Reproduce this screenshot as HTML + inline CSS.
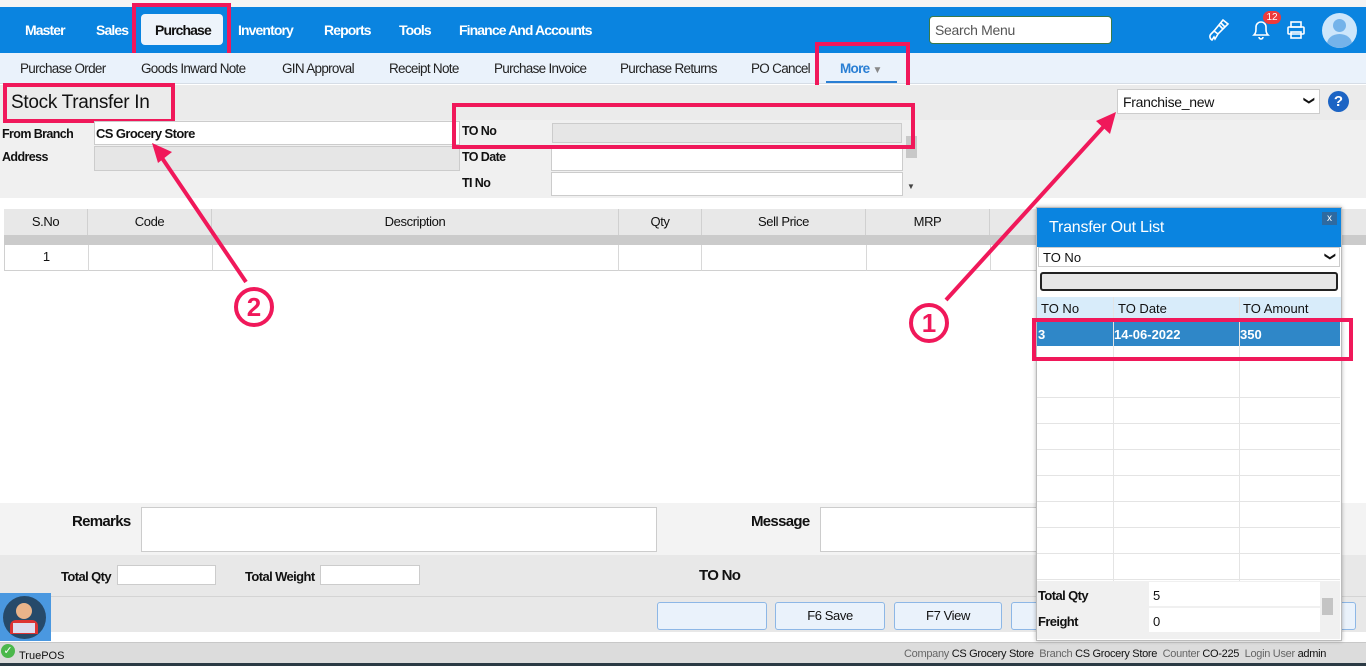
<!DOCTYPE html>
<html><head><meta charset="utf-8"><style>
*{box-sizing:border-box;margin:0;padding:0}
body{width:1366px;height:666px;position:relative;overflow:hidden;background:#fff;font-family:"Liberation Sans",sans-serif;font-size:13px;color:#111}
.a{position:absolute}
.nav{left:0;top:7px;width:1366px;height:46px;background:#0a84e0}
.nv{top:22px;color:#fff;font-weight:bold;font-size:14px;letter-spacing:-0.9px}
.sub{left:0;top:53px;width:1366px;height:31px;background:#eaf2fb;border-bottom:1px solid #d6dde6}
.sb{top:61px;font-size:13.5px;color:#222;letter-spacing:-0.7px}
.lbl{font-size:12.5px;font-weight:bold;letter-spacing:-0.6px}
.inp{background:#fff;border:1px solid #ccc}
.gin{background:#e6e6e6;border:1px solid #ccc}
.red{border:4px solid #f0185a}
.th{top:209px;height:26px;background:#e8e8e8;border-right:1px solid #d0d0d0;text-align:center;line-height:26px;font-size:13px;letter-spacing:-0.4px}
.td{top:245px;height:26px;border-right:1px solid #d8d8d8;border-bottom:1px solid #d0d0d0}
.btn{top:602px;height:28px;background:#eaf2fb;border:1px solid #8db7e6;border-radius:3px;text-align:center;line-height:26px;font-size:13px;letter-spacing:-0.4px}
.circ{width:40px;height:40px;border:4px solid #f0185a;border-radius:50%;background:#fff;color:#f0185a;font-weight:bold;font-size:26px;text-align:center;line-height:32px}
.chev{display:inline-block;transform:rotate(90deg);font-size:11px}
</style></head><body>
<div class="a" style="left:0;top:0;width:1366px;height:7px;background:#f4f4f4"></div>
<div class="a nav"></div>
<div class="a nv" style="left:25px">Master</div>
<div class="a nv" style="left:96px">Sales</div>
<div class="a" style="left:141px;top:14px;width:82px;height:31px;background:#eef4fb;border-radius:4px"></div>
<div class="a nv" style="left:155px;color:#111">Purchase</div>
<div class="a red" style="left:132px;top:3px;width:99px;height:58px"></div>
<div class="a nv" style="left:238px">Inventory</div>
<div class="a nv" style="left:324px">Reports</div>
<div class="a nv" style="left:399px">Tools</div>
<div class="a nv" style="left:459px">Finance And Accounts</div>
<div class="a" style="left:929px;top:16px;width:183px;height:28px;background:#fff;border:1px solid #3a7a4a;border-radius:4px;color:#555;font-size:14px;padding:5px 5px;letter-spacing:-0.3px">Search Menu</div>
<svg class="a" style="left:1206px;top:17px" width="30" height="26" viewBox="0 0 30 26"><g fill="none" stroke="#fff" stroke-width="1.6"><path d="M8 14l9-11 5 4-10 10z"/><path d="M8 14l-3 3c-2 2-1 5 1 6l2-3 1 2 3-5"/><path d="M13 8l4 4M15 6l4 4"/></g></svg>
<svg class="a" style="left:1250px;top:18px" width="22" height="24" viewBox="0 0 22 24"><path d="M4 17c2-2 2-4 2-8a5 5 0 0 1 10 0c0 4 0 6 2 8z M9 19a2 2 0 0 0 4 0" fill="none" stroke="#fff" stroke-width="1.6"/></svg>
<div class="a" style="left:1263px;top:11px;width:18px;height:13px;background:#ee3a3a;border-radius:7px;color:#fff;font-size:10px;text-align:center;line-height:13px">12</div>
<svg class="a" style="left:1286px;top:20px" width="20" height="20" viewBox="0 0 20 20"><g fill="none" stroke="#fff" stroke-width="1.6"><rect x="5" y="2" width="10" height="5"/><rect x="2" y="7" width="16" height="7" rx="1"/><rect x="5" y="12" width="10" height="6"/></g></svg>
<div class="a" style="left:1322px;top:13px;width:35px;height:35px;border-radius:50%;background:#cde6fb;overflow:hidden"><div class="a" style="left:11px;top:6px;width:13px;height:13px;border-radius:50%;background:#74b3ea"></div><div class="a" style="left:5px;top:21px;width:25px;height:20px;border-radius:50%;background:#74b3ea"></div></div>

<div class="a sub"></div>
<div class="a sb" style="left:20px">Purchase Order</div>
<div class="a sb" style="left:141px">Goods Inward Note</div>
<div class="a sb" style="left:282px">GIN Approval</div>
<div class="a sb" style="left:389px">Receipt Note</div>
<div class="a sb" style="left:494px">Purchase Invoice</div>
<div class="a sb" style="left:620px">Purchase Returns</div>
<div class="a sb" style="left:751px">PO Cancel</div>
<div class="a sb" style="left:840px;color:#2a7fd4;font-weight:bold">More <span style="font-size:10px;color:#888">▼</span></div>
<div class="a" style="left:826px;top:81px;width:71px;height:2px;background:#2a7fd4"></div>
<div class="a red" style="left:815px;top:42px;width:95px;height:56px"></div>

<div class="a" style="left:0;top:85px;width:1366px;height:35px;background:#ebebeb"></div>
<div class="a" style="left:0;top:120px;width:1366px;height:78px;background:#f0f0f0"></div>
<div class="a" style="left:11px;top:92px;font-size:19px;letter-spacing:-0.3px">Stock Transfer In</div>
<div class="a red" style="left:3px;top:83px;width:172px;height:40px"></div>
<div class="a lbl" style="left:2px;top:127px">From Branch</div>
<div class="a inp" style="left:94px;top:121px;width:366px;height:24px"></div>
<div class="a lbl" style="left:96px;top:126px;font-size:13px">CS Grocery Store</div>
<div class="a lbl" style="left:2px;top:150px">Address</div>
<div class="a gin" style="left:94px;top:146px;width:366px;height:25px"></div>
<div class="a lbl" style="left:462px;top:124px">TO No</div>
<div class="a gin" style="left:552px;top:123px;width:350px;height:20px"></div>
<div class="a lbl" style="left:462px;top:150px">TO Date</div>
<div class="a inp" style="left:551px;top:147px;width:352px;height:24px"></div>
<div class="a lbl" style="left:462px;top:176px">TI No</div>
<div class="a inp" style="left:551px;top:172px;width:352px;height:24px"></div>
<div class="a" style="left:906px;top:136px;width:11px;height:22px;background:#c8c8c8"></div>
<div class="a" style="left:907px;top:182px;font-size:8px;color:#444">▼</div>
<div class="a red" style="left:452px;top:103px;width:463px;height:46px"></div>
<div class="a" style="left:1117px;top:89px;width:203px;height:25px;background:#fff;border:1px solid #ccc;font-size:14px;padding:4px 5px;letter-spacing:-0.3px">Franchise_new<span class="chev" style="float:right">❯</span></div>
<div class="a" style="left:1328px;top:91px;width:21px;height:21px;border-radius:50%;background:#1c64c4;color:#fff;font-weight:bold;text-align:center;line-height:21px;font-size:15px">?</div>

<div class="a th" style="left:4px;width:84px">S.No</div>
<div class="a th" style="left:88px;width:124px">Code</div>
<div class="a th" style="left:212px;width:407px">Description</div>
<div class="a th" style="left:619px;width:83px">Qty</div>
<div class="a th" style="left:702px;width:164px">Sell Price</div>
<div class="a th" style="left:866px;width:124px">MRP</div>
<div class="a th" style="left:990px;width:376px;border:0"></div>
<div class="a" style="left:4px;top:235px;width:1362px;height:10px;background:#cbcbcb"></div>
<div class="a td" style="left:4px;width:85px;border-left:1px solid #d0d0d0;text-align:center;line-height:24px">1</div>
<div class="a td" style="left:89px;width:124px"></div>
<div class="a td" style="left:213px;width:406px"></div>
<div class="a td" style="left:619px;width:83px"></div>
<div class="a td" style="left:702px;width:165px"></div>
<div class="a td" style="left:867px;width:124px"></div>
<div class="a td" style="left:991px;width:46px"></div>

<div class="a" style="left:0;top:503px;width:1366px;height:52px;background:#f3f3f3"></div>
<div class="a" style="left:72px;top:513px;font-size:15px;font-weight:bold;letter-spacing:-0.7px">Remarks</div>
<div class="a inp" style="left:141px;top:507px;width:516px;height:45px"></div>
<div class="a" style="left:751px;top:513px;font-size:15px;font-weight:bold;letter-spacing:-0.7px">Message</div>
<div class="a inp" style="left:820px;top:507px;width:220px;height:45px"></div>
<div class="a" style="left:0;top:555px;width:1366px;height:42px;background:#e8e8e8;border-bottom:1px solid #d4d4d4"></div>
<div class="a lbl" style="left:61px;top:569px;font-size:13px">Total Qty</div>
<div class="a inp" style="left:117px;top:565px;width:99px;height:20px"></div>
<div class="a lbl" style="left:245px;top:569px;font-size:13px">Total Weight</div>
<div class="a inp" style="left:320px;top:565px;width:100px;height:20px"></div>
<div class="a" style="left:699px;top:567px;font-size:15px;font-weight:bold;letter-spacing:-0.7px">TO No</div>
<div class="a" style="left:0;top:597px;width:1366px;height:35px;background:#e8e8e8"></div>
<div class="a btn" style="left:657px;width:110px"></div>
<div class="a btn" style="left:775px;width:110px">F6 Save</div>
<div class="a btn" style="left:894px;width:108px">F7 View</div>
<div class="a btn" style="left:1011px;width:100px"></div>
<div class="a btn" style="left:1300px;width:56px"></div>
<div class="a" style="left:0;top:593px;width:51px;height:48px;background:#4a98e0"><div class="a" style="left:3px;top:3px;width:43px;height:43px;border-radius:50%;background:#264a6a"></div><div class="a" style="left:16px;top:10px;width:16px;height:16px;border-radius:50%;background:#e9b48a"></div><div class="a" style="left:10px;top:27px;width:28px;height:14px;background:#d33;border-radius:6px 6px 0 0"></div><div class="a" style="left:13px;top:30px;width:22px;height:10px;background:#dde"></div></div>
<div class="a" style="left:0;top:642px;width:1366px;height:21px;background:#dcdcdc;border-top:1px solid #c8c8c8"></div>
<div class="a" style="left:1px;top:644px;width:14px;height:14px;border-radius:50%;background:#4cb84c;color:#fff;font-size:11px;text-align:center;line-height:14px">✓</div>
<div class="a" style="left:19px;top:650px;font-size:11px">TruePOS</div>
<div class="a" style="left:904px;top:648px;font-size:11px;color:#666;letter-spacing:-0.3px">Company <b style="color:#111;font-weight:normal">CS Grocery Store</b>&nbsp; Branch <b style="color:#111;font-weight:normal">CS Grocery Store</b>&nbsp; Counter <b style="color:#111;font-weight:normal">CO-225</b>&nbsp; Login User <b style="color:#111;font-weight:normal">admin</b></div>
<div class="a" style="left:0;top:663px;width:1366px;height:3px;background:#2b3a44"></div>

<!-- popup -->
<div class="a" style="left:1036px;top:207px;width:306px;height:434px;background:#fff;border:1px solid #bbb;box-shadow:0 0 4px rgba(0,0,0,.3)"></div>
<div class="a" style="left:1037px;top:208px;width:304px;height:39px;background:#0a84e0"></div>
<div class="a" style="left:1049px;top:219px;color:#fff;font-size:16px;letter-spacing:-0.2px">Transfer Out List</div>
<div class="a" style="left:1322px;top:212px;width:15px;height:13px;background:#2e6aa0;color:#fff;font-size:10px;text-align:center;line-height:13px">x</div>
<div class="a" style="left:1038px;top:247px;width:302px;height:20px;border:1px solid #ccc;font-size:13px;padding:2px 4px">TO No<span class="chev" style="float:right">❯</span></div>
<div class="a" style="left:1040px;top:272px;width:298px;height:19px;background:#e6e6e6;border:2px solid #222;border-radius:3px"></div>
<div class="a" style="left:1037px;top:297px;width:304px;height:23px;background:#d8ecfa"></div>
<div class="a" style="left:1041px;top:301px;font-size:13px">TO No</div>
<div class="a" style="left:1118px;top:301px;font-size:13px">TO Date</div>
<div class="a" style="left:1243px;top:301px;font-size:13px">TO Amount</div>
<div class="a" style="left:1037px;top:322px;width:303px;height:24px;background:#2f87c8"></div>
<div class="a" style="left:1038px;top:327px;font-size:13px;color:#fff;font-weight:bold">3</div>
<div class="a" style="left:1114px;top:327px;font-size:13px;color:#fff;font-weight:bold">14-06-2022</div>
<div class="a" style="left:1240px;top:327px;font-size:13px;color:#fff;font-weight:bold">350</div>
<div class="a" style="left:1113px;top:297px;width:1px;height:284px;background:#e4e4e4"></div>
<div class="a" style="left:1239px;top:297px;width:1px;height:284px;background:#e4e4e4"></div>
<div class="a" style="left:1037px;top:372px;width:303px;height:210px;background:repeating-linear-gradient(#fff 0 25px,#e4e4e4 25px 26px)"></div>
<div class="a" style="left:1113px;top:372px;width:1px;height:210px;background:#e4e4e4"></div>
<div class="a" style="left:1239px;top:372px;width:1px;height:210px;background:#e4e4e4"></div>
<div class="a" style="left:1037px;top:581px;width:303px;height:58px;background:#f0f0f0"></div>
<div class="a" style="left:1149px;top:582px;width:171px;height:24px;background:#fff"></div>
<div class="a" style="left:1149px;top:608px;width:171px;height:24px;background:#fff"></div>
<div class="a lbl" style="left:1038px;top:588px;font-size:13px">Total Qty</div>
<div class="a" style="left:1153px;top:588px;font-size:13px">5</div>
<div class="a lbl" style="left:1038px;top:614px;font-size:13px">Freight</div>
<div class="a" style="left:1153px;top:614px;font-size:13px">0</div>
<div class="a" style="left:1322px;top:598px;width:11px;height:17px;background:#c4c4c4"></div>
<div class="a red" style="left:1032px;top:318px;width:321px;height:43px"></div>

<!-- arrows -->
<svg class="a" style="left:0;top:0" width="1366" height="666">
<g stroke="#f0185a" stroke-width="4" fill="#f0185a">
<line x1="246" y1="282" x2="160" y2="155"/>
<polygon points="152,143 172,152 158,163" stroke="none"/>
<line x1="946" y1="300" x2="1106" y2="124"/>
<polygon points="1116,112 1110,134 1096,121" stroke="none"/>
</g></svg>
<div class="a circ" style="left:234px;top:287px">2</div>
<div class="a circ" style="left:909px;top:303px">1</div>
</body></html>
